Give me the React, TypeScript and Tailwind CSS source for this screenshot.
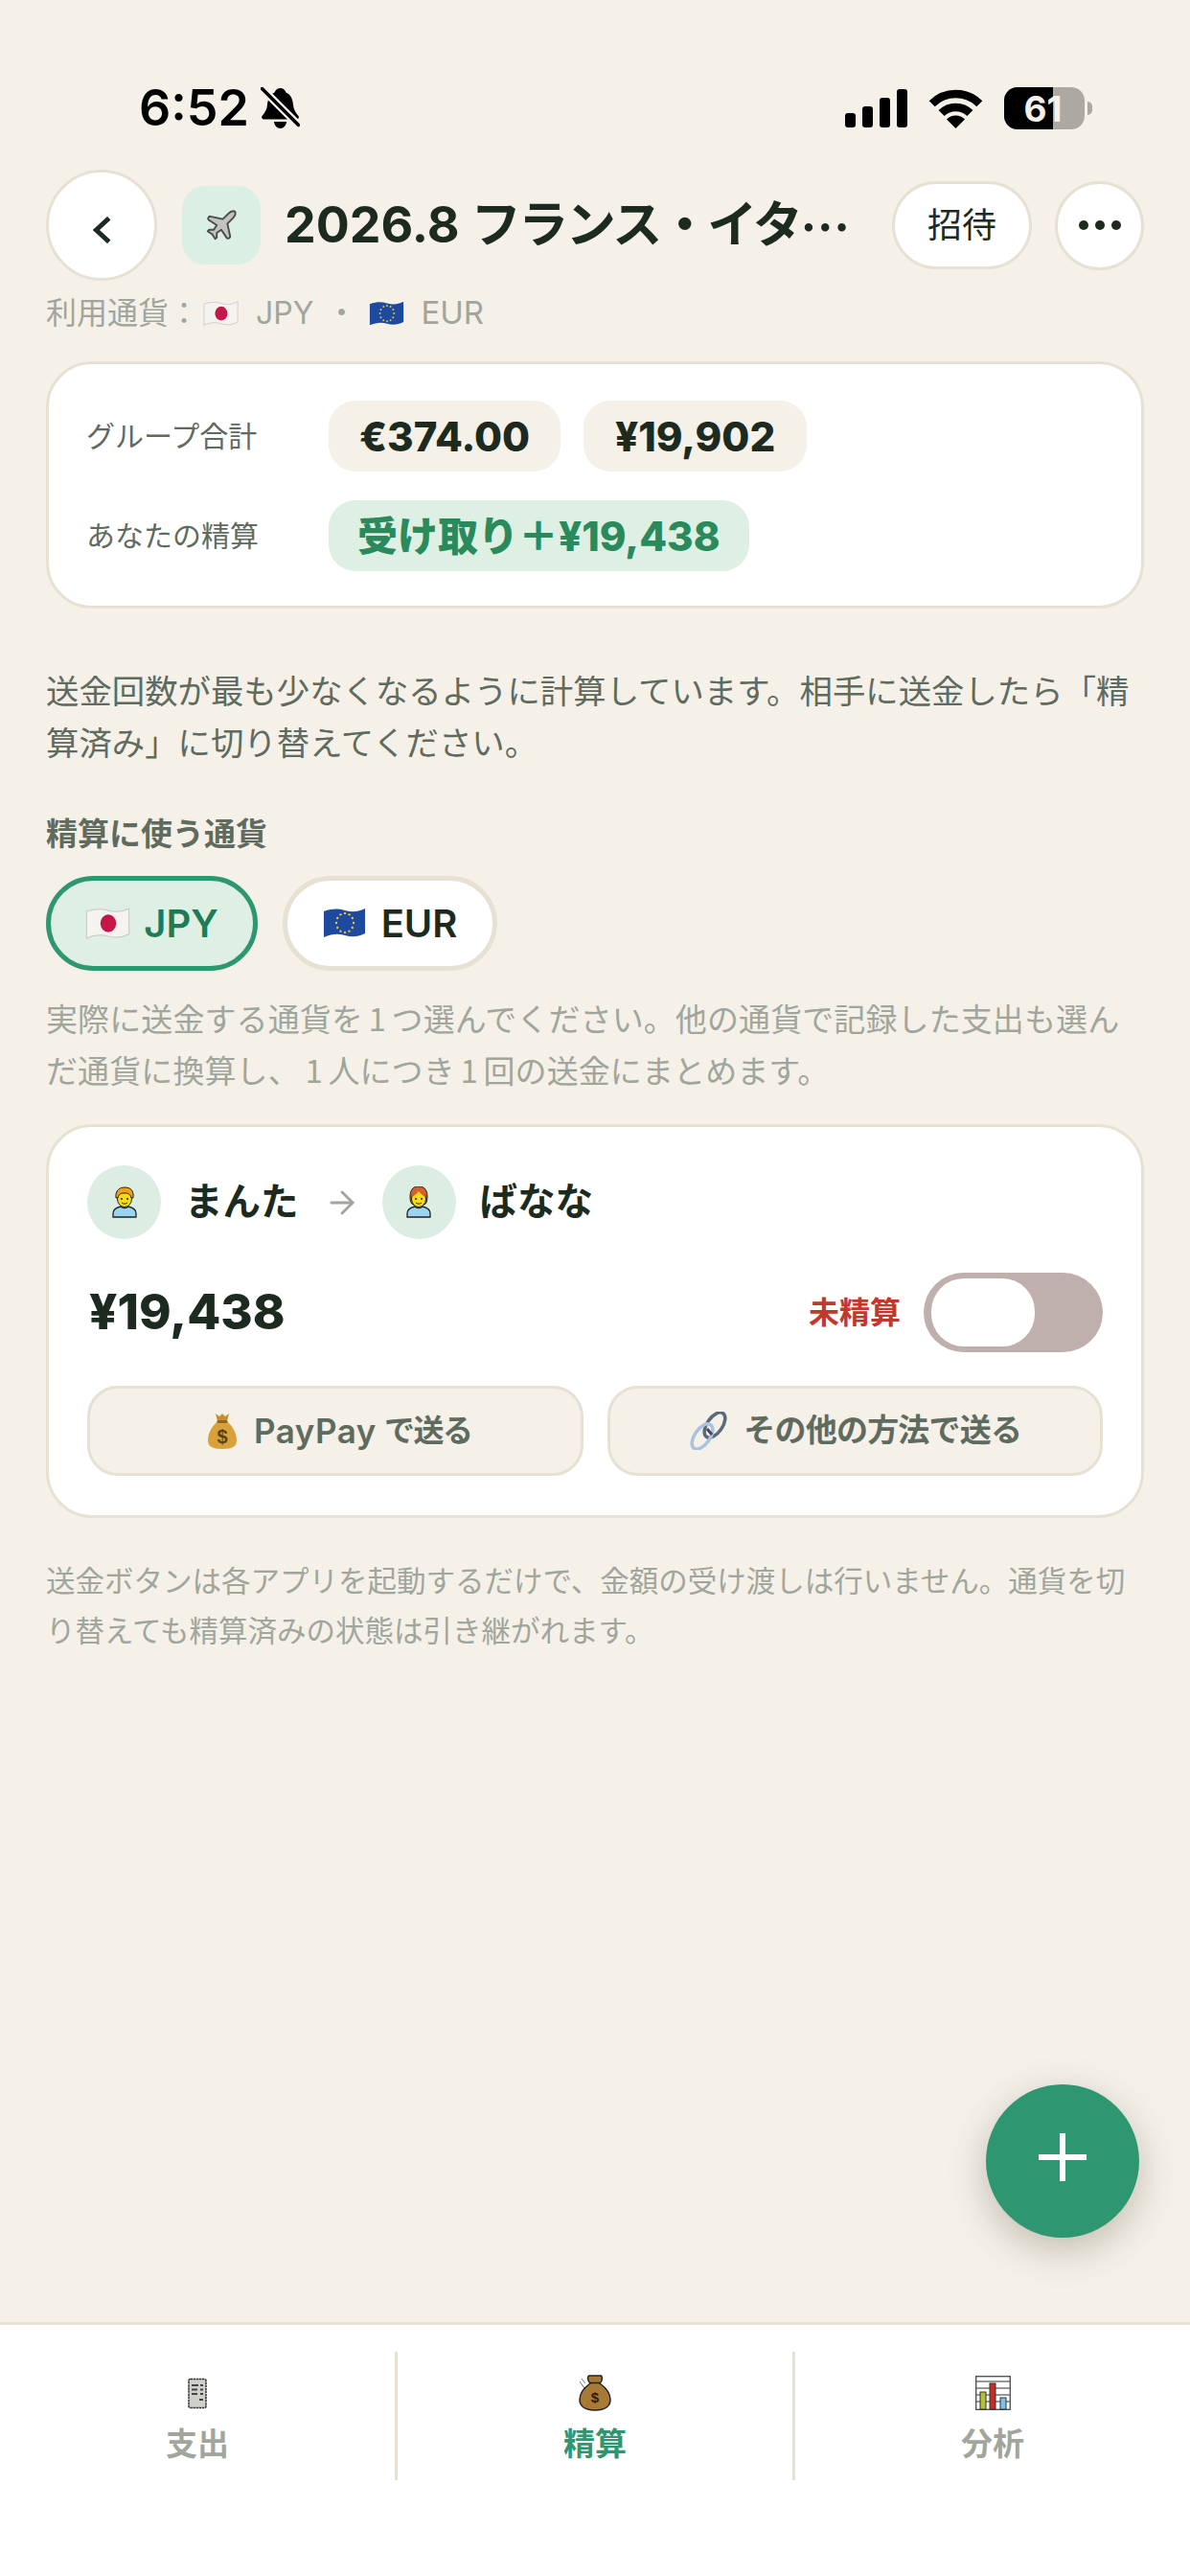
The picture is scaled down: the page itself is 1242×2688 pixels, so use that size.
import { ArrowRight, Plane } from "lucide-react";

function BellSlash() {
  return (
    <svg width="41" height="44" viewBox="0 0 41 44">
      <path d="M20.5 1c3 0 5 2 6 4.500 5 2 7 7 7.500 13 .5 5 2.500 8 5.500 11.500 1 1.500 0 3.500-2 3.500H3.500c-2 0-3-2-2-3.500C4.500 26.500 6.500 23.500 7 18.500c.5-6 2.500-11 7.500-13C15.500 3 17.500 1 20.500 1z" fill="#000" />
      <path d="M14 36h13c-.5 4-3 7-6.500 7S14.500 40 14 36z" fill="#000" />
      <path d="M1 1 L40 40" stroke="#f5f1e9" strokeWidth="8" />
      <path d="M1.500 1.500 L39.500 39.500" stroke="#000" strokeWidth="3.500" strokeLinecap="round" />
    </svg>
  );
}

function Signal() {
  return (
    <svg width="65" height="40" viewBox="0 0 65 40" fill="#000">
      <rect x="0" y="25" width="11" height="15" rx="3" />
      <rect x="18" y="18" width="11" height="22" rx="3" />
      <rect x="36" y="9" width="11" height="31" rx="3" />
      <rect x="54" y="0" width="11" height="40" rx="3" />
    </svg>
  );
}

function Wifi() {
  return (
    <svg width="57" height="41" viewBox="0 0 57 41" fill="none" stroke="#000" strokeWidth="8.500">
      <path d="M3.700 15.200 A35 35 0 0 1 53.300 15.200" />
      <path d="M13.600 25.100 A21 21 0 0 1 43.400 25.100" />
      <path d="M28.500 41 L19 31.500 A13.500 13.500 0 0 1 38 31.500 Z" fill="#000" stroke="none" />
    </svg>
  );
}

function Battery() {
  return (
    <div className="flex items-center gap-[3px]">
      <div className="relative flex h-[44px] w-[84px] overflow-hidden rounded-[14px] bg-[#aca9a2]">
        <div className="h-full w-[51px] bg-black" />
        <span className="absolute inset-0 flex items-center justify-center pr-[3px] text-[37px] font-bold leading-none text-[#f5f1e9]">61</span>
      </div>
      <div className="h-[14px] w-[5px] rounded-r-full bg-[#aca9a2]" />
    </div>
  );
}

function FlagJP({ w, h }: { w: number; h: number }) {
  return (
    <svg width={w} height={h} viewBox="0 0 45 33">
      <path d="M1 4 C10 1 16 1 23 3 S36 5 44 1 V27 C36 31 30 31 23 29 S10 27 1 31 Z" fill="#f4f3f0" stroke="#c9c7c2" strokeWidth="1" />
      <ellipse cx="23" cy="16" rx="8" ry="9" fill="#c5164a" />
    </svg>
  );
}

function FlagEU({ w, h }: { w: number; h: number }) {
  const stars = Array.from({ length: 12 }, (_, i) => {
    const a = (i * Math.PI) / 6;
    return { x: 23 + Math.cos(a) * 9, y: 16 + Math.sin(a) * 10 };
  });
  return (
    <svg width={w} height={h} viewBox="0 0 45 33">
      <path d="M1 4 C10 1 16 1 23 3 S36 5 44 1 V27 C36 31 30 31 23 29 S10 27 1 31 Z" fill="#1d4a9e" />
      {stars.map((s, i) => (
        <circle key={i} cx={s.x} cy={s.y} r="1.200" fill="#e8c53a" />
      ))}
    </svg>
  );
}

function Person({ hair }: { hair: "short" | "long" }) {
  return (
    <svg width="26" height="33" viewBox="0 0 26 33">
      <path d="M1 32 V28 C1 24 5 22 9 21 C11 23 15 23 17 21 C21 22 25 24 25 28 V32 Z" fill="#9ad4f2" stroke="#222" strokeWidth="1.300" />
      {hair === "long" ? (
        <path d="M13 0 C20 0 22 5 22 11 C22 15 21 18 19 19 H7 C5 18 4 15 4 11 C4 5 6 0 13 0 Z" fill="#d5612b" stroke="#222" strokeWidth="1" />
      ) : null}
      <ellipse cx="13" cy="13" rx="7.500" ry="8.500" fill="#f6dc17" stroke="#222" strokeWidth="1" />
      {hair === "short" ? (
        <path d="M4 12 C3 4 8 1 13 1 C19 1 23 4 22 12 L20 12 C19 8 17 7 13 7 C9 7 7 8 6 12 Z" fill="#efa013" stroke="#222" strokeWidth="1" />
      ) : (
        <path d="M6 11 C8 10 11 8 13 5 C15 8 18 10 20 11 C20 6 17 3 13 3 C9 3 6 6 6 11 Z" fill="#d5612b" />
      )}
      <circle cx="10" cy="13" r="1" fill="#222" />
      <circle cx="16" cy="13" r="1" fill="#222" />
      <path d="M10 17 C11.500 18.500 14.500 18.500 16 17" fill="none" stroke="#222" strokeWidth="1" />
    </svg>
  );
}

function GoldBag() {
  return (
    <svg width="30" height="38" viewBox="0 0 30 38" className="ml-[10px]">
      <path d="M8 1 L12 4 L15 1 L18 4 L22 1 L20 9 H10 Z" fill="#c98f2e" />
      <path d="M10 9 H20 C27 16 30 22 30 29 C30 35 26 38 15 38 C4 38 0 35 0 29 C0 22 3 16 10 9 Z" fill="#d8a13a" />
      <rect x="9.500" y="8" width="11" height="3" rx="1.500" fill="#8f6420" />
      <text x="15" y="32" textAnchor="middle" fontSize="20" fontWeight="700" fill="#5c3f10" fontFamily="Liberation Sans, sans-serif">$</text>
    </svg>
  );
}

function LinkRings() {
  return (
    <svg width="44" height="40" viewBox="0 0 44 40" fill="none">
      <ellipse cx="28" cy="14" rx="8" ry="15" transform="rotate(35 28 14)" stroke="#5b6a7a" strokeWidth="3.500" />
      <ellipse cx="15" cy="26" rx="8" ry="15" transform="rotate(35 15 26)" stroke="#a9c4de" strokeWidth="3.500" />
      <path d="M20 18 L25 24" stroke="#3f4a55" strokeWidth="3" />
    </svg>
  );
}

function Receipt() {
  return (
    <svg width="20" height="33" viewBox="0 0 20 33">
      <rect x="1" y="1.500" width="18" height="30" rx="1.500" fill="#cfcfcb" stroke="#333" strokeWidth="1.500" strokeDasharray="2.500 .6" />
      <path d="M4 8 H11 M13 8 H16 M4 12.500 H10 M13 12.500 H16 M4 17 H10 M13 17 H16 M12 23 H16" stroke="#444" strokeWidth="2" />
    </svg>
  );
}

function BrownBag() {
  return (
    <svg width="34" height="38" viewBox="0 0 34 38">
      <path d="M1 7 L6 14 M3 4 L7 9" stroke="#777" strokeWidth="1" />
      <path d="M11 1 H23 C25 1 25 7 22 9 C29 14 33 20 33 26 C33 33 27 37 17 37 C7 37 1 33 1 26 C1 20 5 14 12 9 C9 7 9 1 11 1 Z" fill="#a97a36" stroke="#222" strokeWidth="1.500" />
      <path d="M11 8.500 H23" stroke="#222" strokeWidth="1.500" />
      <text x="17" y="29" textAnchor="middle" fontSize="15" fontWeight="700" fill="#2a1c08" fontFamily="Liberation Sans, sans-serif">$</text>
    </svg>
  );
}

function BarChart() {
  return (
    <svg width="37" height="36" viewBox="0 0 37 36">
      <rect x=".7" y=".7" width="35.600" height="34.600" fill="#fff" stroke="#555" strokeWidth="1.400" />
      <path d="M1 6 H36 M1 13 H36 M1 20 H36 M1 27 H36" stroke="#777" strokeWidth="1.400" />
      <rect x="5" y="17" width="6" height="18" fill="#b3c22f" stroke="#333" />
      <rect x="15" y="8" width="6" height="27" fill="#c92a24" stroke="#333" />
      <rect x="26" y="23" width="6" height="12" fill="#7cc3ec" stroke="#333" />
    </svg>
  );
}

function SendButton({ icon, children }: { icon: React.ReactNode; children: React.ReactNode }) {
  return (
    <button type="button" className="flex h-[94px] flex-1 items-center justify-center gap-[14px] rounded-[32px] border-[3px] border-[#e6e1d2] bg-[#f5f1e9] text-[33px] font-semibold text-[#5f6b5f]">
      {icon}
      <span className="flex items-center">{children}</span>
    </button>
  );
}

function Tab({ icon, label, active, divider }: { icon: React.ReactNode; label: string; active?: boolean; divider?: boolean }) {
  return (
    <div className={`flex h-[134px] flex-1 flex-col items-center ${divider ? "border-r-[3px] border-[#e6e1d2]" : ""}`}>
      <div className="flex h-[86px] items-center justify-center">{icon}</div>
      <span className={`-mt-[10px] text-[33px] font-semibold leading-[40px] ${active ? "text-[#2e9771]" : "text-[#a0a69c]"}`}>{label}</span>
    </div>
  );
}

export default function App() {
  return (
    <div lang="ja" className="relative flex h-[2688px] w-[1242px] flex-col overflow-hidden bg-[#f5f1e9] font-['Inter','Noto_Sans_CJK_JP',sans-serif] text-[#1c2a20]">
      {/* status bar */}
      <div className="flex h-[177px] items-start justify-between pl-[145px] pr-[102px] pt-[84px]">
        <div className="flex h-[58px] items-center gap-[12px] text-black">
          <span className="text-[52px] font-semibold leading-[58px]">6:52</span>
          <BellSlash />
        </div>
        <div className="flex h-[58px] items-center gap-[22px]">
          <Signal />
          <Wifi />
          <Battery />
        </div>
      </div>

      <div className="flex flex-col px-[48px]">
        {/* header */}
        <div className="flex h-[116px] items-center">
          <button type="button" className="flex h-[116px] w-[116px] shrink-0 items-center justify-center rounded-full border-[3px] border-[#e6e1d2] bg-white">
            <svg width="19" height="28" viewBox="0 0 17 25" className="mt-[10px]" fill="none" stroke="#1c2a20" strokeWidth="4.500">
              <path d="M15 1.500 L3 12.500 L15 23.500" />
            </svg>
          </button>
          <div className="ml-[26px] flex h-[82px] w-[82px] shrink-0 items-center justify-center rounded-[24px] bg-[#dbefe5]">
            <Plane size={38} fill="#c2c2be" stroke="#4a4a48" strokeWidth={1.200} />
          </div>
          <h1 className="ml-[25px] flex min-w-0 flex-1 items-center whitespace-nowrap text-[52px] font-bold leading-none">
            <span>2026.8&nbsp;</span>
            <span className="tracking-[-2.500px]">フランス・イタ</span>
            <span className="font-['Noto_Sans_CJK_JP',sans-serif]">…</span>
          </h1>
          <button type="button" className="h-[92px] w-[146px] shrink-0 rounded-[46px] border-[3px] border-[#e6e1d2] bg-white text-[36px]">招待</button>
          <button type="button" className="ml-[24px] flex h-[93px] w-[93px] shrink-0 items-center justify-center gap-[7px] rounded-full border-[3px] border-[#e6e1d2] bg-white">
            <span className="h-[10px] w-[10px] rounded-full bg-[#1c2a20]" />
            <span className="h-[10px] w-[10px] rounded-full bg-[#1c2a20]" />
            <span className="h-[10px] w-[10px] rounded-full bg-[#1c2a20]" />
          </button>
        </div>

        <div className="mt-[14px] flex h-[40px] items-center text-[32px] text-[#a0a69c]">
          <span>利用通貨：</span>
          <span className="ml-[4px]"><FlagJP w={37} h={27} /></span>
          <span className="ml-[18px]">JPY</span>
          <span className="mx-[13px]">・</span>
          <FlagEU w={37} h={27} />
          <span className="ml-[17px] text-[33px]">EUR</span>
        </div>

        {/* summary card */}
        <div className="mt-[30px] flex h-[258px] flex-col gap-[30px] rounded-[48px] border-[3px] border-[#e6e1d2] bg-white pl-[39px] pt-[38px]">
          <div className="flex items-center">
            <span className="w-[253px] text-[30px] text-[#5f6b5f]">グループ合計</span>
            <div className="flex gap-[24px]">
              <span className="flex h-[74px] items-center rounded-[28px] bg-[#f5f1e9] px-[32px] text-[42px] font-extrabold">€374.00</span>
              <span className="flex h-[74px] items-center rounded-[28px] bg-[#f5f1e9] px-[33px] text-[42px] font-extrabold">¥19,902</span>
            </div>
          </div>
          <div className="flex items-center">
            <span className="w-[253px] text-[30px] text-[#5f6b5f]">あなたの精算</span>
            <span className="flex h-[74px] items-center rounded-[28px] bg-[#deefe4] px-[30px] text-[42px] font-extrabold text-[#2a8a5c]">受け取り＋¥19,438</span>
          </div>
        </div>

        <p className="mt-[60px] text-[34.4px] leading-[54px] text-[#5f6b5f]">送金回数が最も少なくなるように計算しています。相手に送金したら「精算済み」に切り替えてください。</p>

        <h2 className="mt-[45px] text-[33px] font-bold leading-[44px] text-[#5f6b5f]">精算に使う通貨</h2>

        <div className="mt-[22px] flex gap-[26px]">
          <button type="button" className="flex h-[99px] w-[221px] items-center justify-center gap-[14px] rounded-[50px] border-[5px] border-[#2e9771] bg-[#deefe4] text-[40px] font-semibold text-[#1f7a58]">
            <FlagJP w={47} h={34} />
            JPY
          </button>
          <button type="button" className="flex h-[99px] w-[224px] items-center justify-center gap-[16px] rounded-[50px] border-[5px] border-[#e6e1d2] bg-white text-[40px] font-semibold">
            <FlagEU w={45} h={33} />
            EUR
          </button>
        </div>

        <p className="mt-[22px] font-['Noto_Sans_CJK_JP',sans-serif] text-[33px] leading-[54px] tracking-[0.1px] text-[#a0a69c]">
          実際に送金する通貨を&#8198;1&#8198;つ選んでください。他の通貨で記録した支出も選んだ通貨に換算し、&#8198;1&#8198;人につき&#8198;1&#8198;回の送金にまとめます。
        </p>

        {/* transfer card */}
        <div className="mt-[30px] flex h-[411px] flex-col rounded-[48px] border-[3px] border-[#e6e1d2] bg-white px-[40px] pt-[40px]">
          <div className="flex h-[77px] items-center">
            <div className="flex h-[77px] w-[77px] items-center justify-center rounded-full bg-[#dceee3]"><Person hair="short" /></div>
            <span className="ml-[25px] text-[39.5px] font-bold">まんた</span>
            <ArrowRight className="ml-[26px] text-[#a0a69c]" size={38} strokeWidth={1.800} />
            <div className="ml-[23px] flex h-[77px] w-[77px] items-center justify-center rounded-full bg-[#dceee3]"><Person hair="long" /></div>
            <span className="ml-[25px] text-[39.5px] font-bold">ばなな</span>
          </div>

          <div className="mt-[35px] flex h-[83px] items-center justify-between">
            <span className="ml-[2px] text-[51px] font-extrabold">¥19,438</span>
            <div className="flex items-center gap-[24px]">
              <span className="text-[32px] font-bold text-[#c0392b]">未精算</span>
              <div className="flex h-[83px] w-[187px] items-center rounded-[42px] bg-[#bfb0ae] pl-[8px]">
                <div className="h-[71px] w-[108px] rounded-[34px] bg-white" />
              </div>
            </div>
          </div>

          <div className="mt-[35px] flex gap-[25px]">
            <SendButton icon={<GoldBag />}>
              <span className="ml-[4px] text-[35px] tracking-[0.5px]">PayPay</span>
              <span className="ml-[8px] text-[32px] tracking-[-1.500px]">で送る</span>
            </SendButton>
            <SendButton icon={<LinkRings />}>
              <span className="tracking-[-0.8px]">その他の方法で送る</span>
            </SendButton>
          </div>
        </div>

        <p className="mt-[40px] text-[30.5px] leading-[52px] text-[#a0a69c]">送金ボタンは各アプリを起動するだけで、金額の受け渡しは行いません。通貨を切り替えても精算済みの状態は引き継がれます。</p>
      </div>

      <div className="flex-1" />

      {/* tab bar */}
      <div className="h-[265px] border-t-[3px] border-[#e6e1d2] bg-white pt-[28px]">
        <div className="flex">
          <Tab icon={<Receipt />} label="支出" divider />
          <Tab icon={<BrownBag />} label="精算" active divider />
          <Tab icon={<BarChart />} label="分析" />
        </div>
      </div>

      {/* floating add button */}
      <button type="button" className="absolute left-[1029px] top-[2175px] flex h-[160px] w-[160px] items-center justify-center rounded-full bg-[#2e9771] shadow-[0_12px_40px_rgba(60,50,30,0.28)]">
        <svg width="50" height="50" viewBox="0 0 50 50" className="-mt-[8px]" fill="#fff">
          <rect x="22" y="0" width="6" height="50" />
          <rect x="0" y="22" width="50" height="6" />
        </svg>
      </button>
    </div>
  );
}
